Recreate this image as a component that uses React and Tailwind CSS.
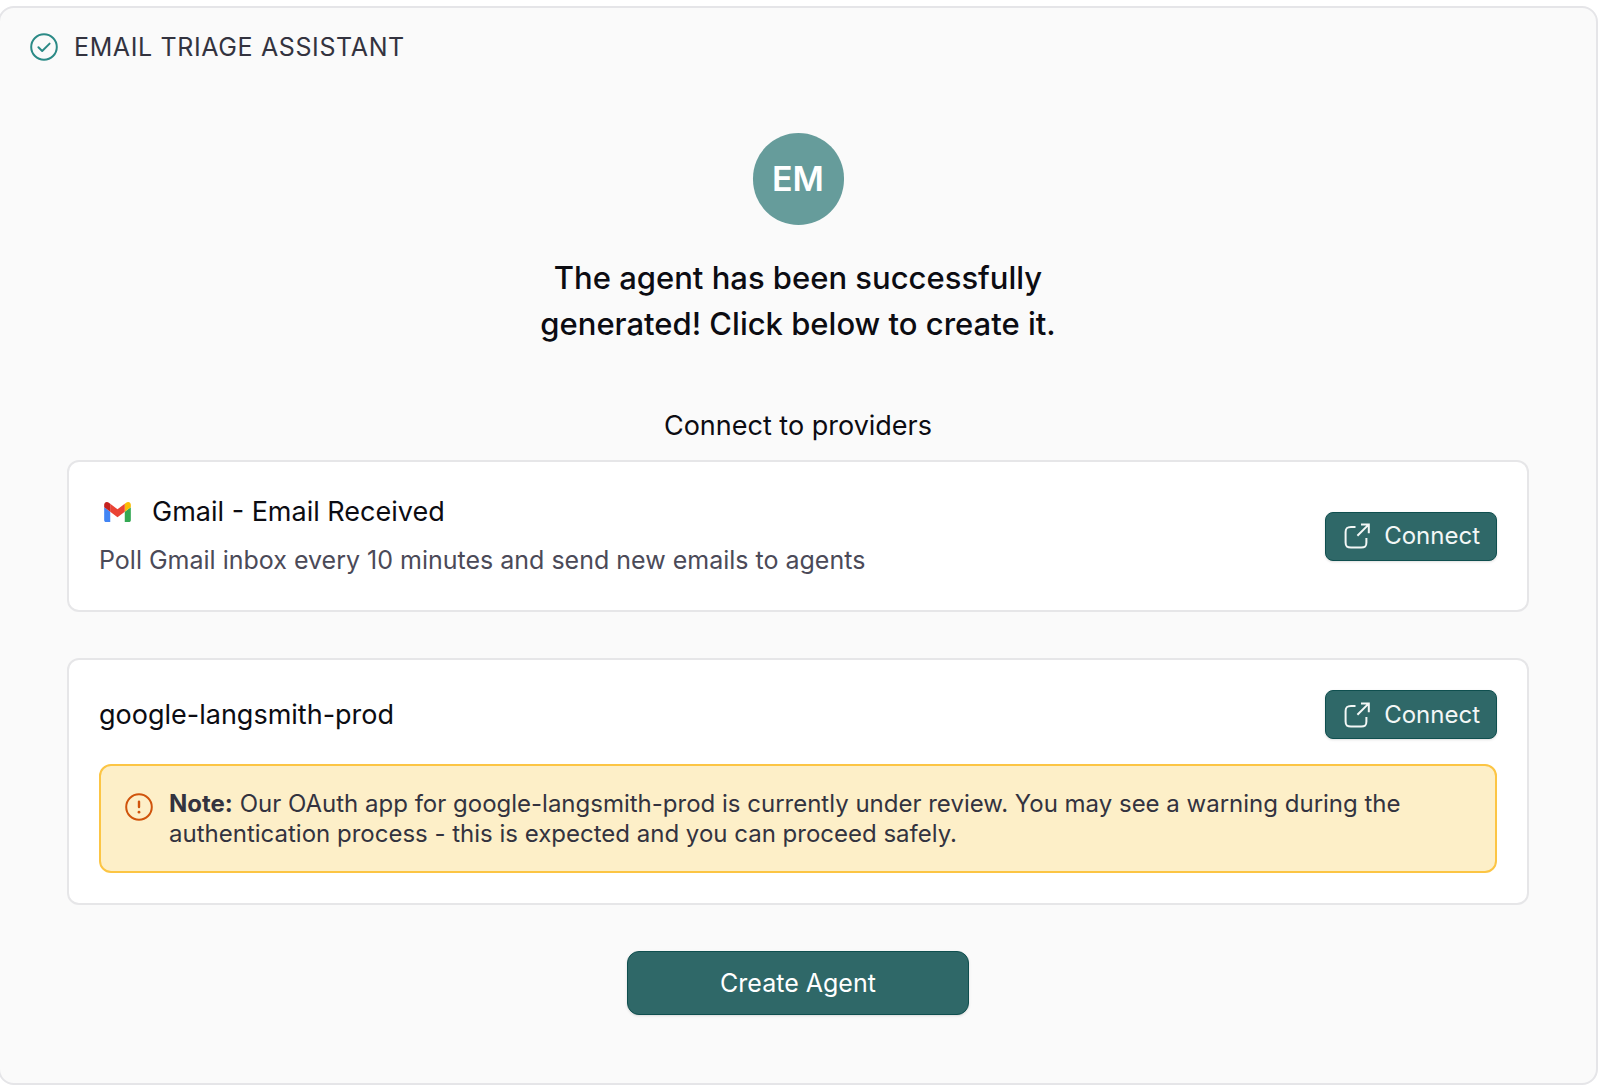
const PROVIDERS = [
  {
    id: "gmail",
    title: "Gmail - Email Received",
    desc: "Poll Gmail inbox every 10 minutes and send new emails to agents",
    logo: true,
  },
  {
    id: "google",
    title: "google-langsmith-prod",
    note: "Our OAuth app for google-langsmith-prod is currently under review. You may see a warning during the authentication process - this is expected and you can proceed safely.",
  },
]

function CheckCircle() {
  return (
    <svg viewBox="0 0 28 28" fill="none" stroke="#2b8a86" strokeWidth="2" strokeLinecap="round" strokeLinejoin="round" className="size-7 shrink-0" aria-hidden="true">
      <circle cx="14" cy="14" r="12.8" />
      <path d="M8.4 14.3l3.8 3.7 7.4-7.4" />
    </svg>
  )
}

function AlertCircle() {
  return (
    <svg viewBox="0 0 28 28" fill="none" stroke="#d0540c" strokeWidth="2" strokeLinecap="round" className="mt-1 size-7 shrink-0" aria-hidden="true">
      <circle cx="14" cy="14" r="12.8" />
      <path d="M14 8.8v5.2" strokeWidth="2.4" />
      <path d="M14 19.1v.1" strokeWidth="2.8" />
    </svg>
  )
}

function ExternalIcon() {
  return (
    <svg viewBox="0 0 26 26" fill="none" stroke="currentColor" strokeWidth="2" className="size-[26px] shrink-0" aria-hidden="true">
      <path d="M11.5 4H7C3 4 1.6 5 1.6 9v10.4c0 4 1.4 5.2 5.4 5.2h10.2c4 0 5.2-1.2 5.2-5.2V15" />
      <path d="M17 1.4h7.8v8.8M24.6 1.6L13.4 12.8" />
    </svg>
  )
}

function GmailLogo() {
  return (
    <svg viewBox="52 42 88 66" className="h-5 w-[27px] shrink-0" aria-hidden="true">
      <path fill="#4285f4" d="M58 108h14V74L52 59v43c0 3.32 2.69 6 6 6" />
      <path fill="#34a853" d="M120 108h14c3.32 0 6-2.69 6-6V59l-20 15" />
      <path fill="#fbbc04" d="M120 48v26l20-15v-8c0-7.42-8.47-11.65-14.4-7.2" />
      <path fill="#ea4335" d="M72 74V48l24 18 24-18v26L96 92" />
      <path fill="#c5221f" d="M52 51v8l20 15V48l-5.6-4.2c-5.94-4.45-14.4-.22-14.4 7.2" />
    </svg>
  )
}

function ConnectButton({ provider }) {
  return (
    <button type="button" aria-label={`Connect ${provider}`}
      className="flex h-[49px] shrink-0 items-center gap-3.5 rounded-lg border border-[#0f4f4f] bg-[#2f6868] pr-4 pl-[18px] text-[24px] leading-8 text-[#f3f7f6] shadow-sm">
      <ExternalIcon />
      Connect
    </button>
  )
}

function ProviderCard({ provider }) {
  return (
    <section className="rounded-xl border-2 border-[#e6e6e8] bg-white p-[30px]">
      <div className="flex items-center justify-between gap-6">
        <div>
          <h3 className="flex items-center gap-[21px] text-[27px] leading-10 text-[#0c0c12]">
            {provider.logo && <span className="flex pl-[5px]"><GmailLogo /></span>}
            {provider.title}
          </h3>
          {provider.desc && (
            <p className="mt-2 text-[25px] leading-10 text-[#4b4a58]">{provider.desc}</p>
          )}
        </div>
        <ConnectButton provider={provider.title} />
      </div>
      {provider.note && (
        <div className="mt-[25px] flex gap-4 rounded-xl border-2 border-[#fcc544] bg-[#fdefc8] px-6 pt-[23px] pb-[22px]">
          <AlertCircle />
          <p className="text-[24px] leading-[30px] text-[#33333f]">
            <strong className="font-bold">Note:</strong> {provider.note}
          </p>
        </div>
      )}
    </section>
  )
}

function App() {
  return (
    <div className="min-h-screen bg-white pt-1.5 pb-1 font-['Inter',sans-serif]">
      <main className="-ml-0.5 mr-0.5 rounded-2xl border-2 border-[#e5e5e8] bg-[#fafafa] pb-[68px]">
        <header className="flex items-center gap-4 pt-[19px] pl-[30px]">
          <CheckCircle />
          <h1 className="text-[25px] leading-10 tracking-wide text-[#33333f] uppercase">Email Triage Assistant</h1>
        </header>

        <div className="flex flex-col items-center px-[67px] pt-[66px]">
          <div className="flex h-[92px] w-[91px] items-center justify-center rounded-full bg-[#669c9b] text-[34px] leading-10 font-semibold text-white">
            EM
          </div>
          <h2 className="mt-[30px] max-w-[560px] text-center text-[31px] leading-[46px] font-medium text-[#0c0c12]">
            The agent has been successfully generated! Click below to create it.
          </h2>

          <p className="mt-[59px] text-[27px] leading-10 text-[#0c0c12]">Connect to providers</p>
          <div className="mt-3.5 flex w-full flex-col gap-[46px]">
            {PROVIDERS.map(provider => (
              <ProviderCard key={provider.id} provider={provider} />
            ))}
          </div>

          <button type="button"
            className="mt-[46px] h-16 w-[342px] rounded-xl border border-[#0f4f4f] bg-[#2f6868] text-[25px] leading-8 text-white shadow-sm">
            Create Agent
          </button>
        </div>
      </main>
    </div>
  )
}

export default App
